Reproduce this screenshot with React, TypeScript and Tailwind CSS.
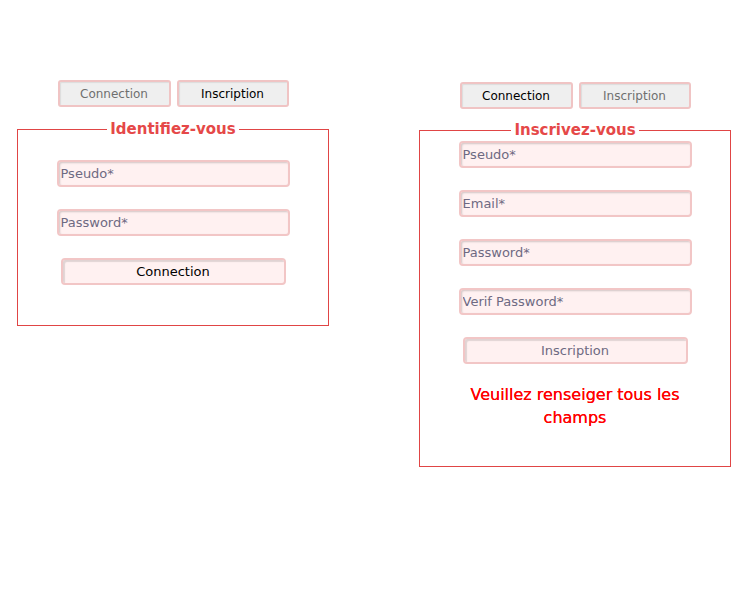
import React from 'react';

const tabBase =
  'h-[27px] rounded-[3px] border-2 border-[#f0c4c4] bg-[#efefef] text-[12px] shadow-[inset_1px_1px_1px_rgba(0,0,0,0.08)]';

const inputCls =
  'block mx-auto w-[233px] h-[27px] rounded-[4px] border-2 border-[#f2c6c6] bg-[#fff1f1] px-[2px] text-[13px] text-[#444] placeholder:text-[#6e6a82] shadow-[inset_1px_1px_2px_rgba(0,0,0,0.18)] outline-none';

const submitCls =
  'block mx-auto w-[225px] h-[27px] rounded-[4px] border-2 border-[#f2c6c6] bg-[#fff1f1] text-[13px] shadow-[inset_2px_2px_1px_rgba(0,0,0,0.12)]';

const Tabs = ({ active }: { active: 'connection' | 'inscription' }) => (
  <div className="flex justify-center gap-[6px]">
    <button className={`${tabBase} w-[113px] ${active === 'connection' ? 'text-black' : 'text-[#6f6f6f]'}`}>Connection</button>
    <button className={`${tabBase} w-[112px] ${active === 'inscription' ? 'text-black' : 'text-[#6f6f6f]'}`}>Inscription</button>
  </div>
);

export default function App() {
  return (
    <div
      className="min-h-[600px] w-[750px] bg-white pt-[80px] pl-[17px]"
      style={{ fontFamily: '"DejaVu Sans", Verdana, sans-serif' }}
    >
      <div className="flex items-start gap-[90px]">
        {/* connexion */}
        <div className="w-[312px]">
          <Tabs active="inscription" />
          <fieldset className="mt-[12px] border border-[#e04545] pb-[40px]">
            <legend className="mx-auto px-[3px] text-[15px] font-bold leading-[20px] text-[#e54848]">Identifiez-vous</legend>
            <div className="mt-[21px] flex flex-col gap-[22px]">
              <input className={inputCls} placeholder="Pseudo*" />
              <input className={inputCls} type="password" placeholder="Password*" />
              <button className={`${submitCls} text-black`}>Connection</button>
            </div>
          </fieldset>
        </div>

        {/* inscription */}
        <div className="mt-[2px] w-[312px]">
          <Tabs active="connection" />
          <fieldset className="mt-[11px] border border-[#e04545] pb-[37px]">
            <legend className="mx-auto px-[3px] text-[15px] font-bold leading-[20px] text-[#e54848]">Inscrivez-vous</legend>
            <div className="mt-[1px] flex flex-col gap-[22px]">
              <input className={inputCls} placeholder="Pseudo*" />
              <input className={inputCls} placeholder="Email*" />
              <input className={inputCls} type="password" placeholder="Password*" />
              <input className={inputCls} type="password" placeholder="Verif Password*" />
              <button className={`${submitCls} text-[#6e6a82]`}>Inscription</button>
            </div>
            <p className="mx-auto mt-[19px] w-[240px] text-center text-[16px] leading-[23px] text-[#ff0000] [text-shadow:0_0_0.4px_#ff0000]">
              Veuillez renseiger tous les champs
            </p>
          </fieldset>
        </div>
      </div>
    </div>
  );
}
